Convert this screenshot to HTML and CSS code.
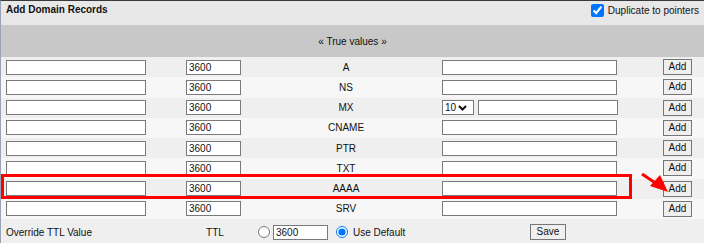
FILE: index.html
```html
<!DOCTYPE html>
<html>
<head>
<meta charset="utf-8">
<link rel="stylesheet" href="styles.css">
</head>
<body>
<div class="panel">
  <div class="head">
    <span class="title">Add Domain Records</span>
    <label class="dup"><input type="checkbox" class="chk" checked><span>Duplicate to pointers</span></label>
  </div>
  <div class="truevals">« True values »</div>

  <div class="row odd">
    <div class="c1"><span class="inp name"></span></div>
    <div class="c2"><span class="inp ttl">3600</span></div>
    <div class="c3">A</div>
    <div class="c4"><span class="inp val"></span></div>
    <div class="c5"><span class="btn">Add</span></div>
  </div>
  <div class="row even">
    <div class="c1"><span class="inp name"></span></div>
    <div class="c2"><span class="inp ttl">3600</span></div>
    <div class="c3">NS</div>
    <div class="c4"><span class="inp val"></span></div>
    <div class="c5"><span class="btn">Add</span></div>
  </div>
  <div class="row odd">
    <div class="c1"><span class="inp name"></span></div>
    <div class="c2"><span class="inp ttl">3600</span></div>
    <div class="c3">MX</div>
    <div class="c4">
      <span class="sel">10<svg class="chev" width="9" height="6" viewBox="0 0 9 6"><path d="M1 1 L4.5 4.5 L8 1" fill="none" stroke="#111" stroke-width="2"/></svg></span><span class="inp mxval"></span>
    </div>
    <div class="c5"><span class="btn">Add</span></div>
  </div>
  <div class="row even">
    <div class="c1"><span class="inp name"></span></div>
    <div class="c2"><span class="inp ttl">3600</span></div>
    <div class="c3">CNAME</div>
    <div class="c4"><span class="inp val"></span></div>
    <div class="c5"><span class="btn">Add</span></div>
  </div>
  <div class="row odd">
    <div class="c1"><span class="inp name"></span></div>
    <div class="c2"><span class="inp ttl">3600</span></div>
    <div class="c3">PTR</div>
    <div class="c4"><span class="inp val"></span></div>
    <div class="c5"><span class="btn">Add</span></div>
  </div>
  <div class="row even">
    <div class="c1"><span class="inp name"></span></div>
    <div class="c2"><span class="inp ttl">3600</span></div>
    <div class="c3">TXT</div>
    <div class="c4"><span class="inp val"></span></div>
    <div class="c5"><span class="btn">Add</span></div>
  </div>
  <div class="row odd">
    <div class="c1"><span class="inp name"></span></div>
    <div class="c2"><span class="inp ttl">3600</span></div>
    <div class="c3">AAAA</div>
    <div class="c4"><span class="inp val"></span></div>
    <div class="c5"><span class="btn">Add</span></div>
  </div>
  <div class="row even">
    <div class="c1"><span class="inp name"></span></div>
    <div class="c2"><span class="inp ttl">3600</span></div>
    <div class="c3">SRV</div>
    <div class="c4"><span class="inp val"></span></div>
    <div class="c5"><span class="btn">Add</span></div>
  </div>
  <div class="override">
    <div class="o1">Override TTL Value</div>
    <div class="o2">TTL</div>
    <div class="o3">
      <input type="radio" name="ttl" class="rad">
      <span class="inp ttl">3600</span>
      <input type="radio" name="ttl" class="rad rad2" checked>
      <span class="usedef">Use Default</span>
    </div>
    <div class="o4"><span class="btn save">Save</span></div>
  </div>

  <div class="highlight"></div>
  <svg class="arrow" width="34" height="26" viewBox="0 0 34 26">
    <line x1="1" y1="2" x2="16" y2="12" stroke="#f00" stroke-width="3"/>
    <polygon points="27,20 9,14 19,3" fill="#f00"/>
  </svg>
</div>
</body>
</html>
```

FILE: styles.css
```css
* { box-sizing: border-box; }
html, body { margin: 0; padding: 0; background: #ffffff; }
body {
  font-family: "Liberation Sans", Arial, sans-serif;
  font-size: 10px;
  color: #111;
}
.panel {
  position: relative;
  width: 704px;
  height: 243px;
  border-top: 1px solid #3a3a3a;
  border-left: 1px solid #9aa3b5;
  background: #f4f4f4;
  overflow: hidden;
}
.head {
  height: 24px;
  background: #e8e8e8;
  display: flex;
  justify-content: space-between;
  align-items: flex-start;
  padding: 3px 5px 0 5px;
}
.title { font-weight: bold; line-height: 12px; }
.dup { display: flex; align-items: center; gap: 4px; margin-top: 0; }
.chk { margin: 0; width: 13px; height: 13px; accent-color: #0075ff; }
.truevals {
  height: 32px;
  background: #c8c8c8;
  display: flex;
  align-items: center;
  justify-content: center;
  padding-left: 0;
}
.row {
  display: grid;
  grid-template-columns: 171px 83px 182px 212px 1fr;
  align-items: center;
  height: 20.25px;
}
.odd { background: #efefef; }
.even { background: #f7f7f7; }
.c1 { padding-left: 5px; }
.c2 { text-align: center; }
.c3 { text-align: center; font-weight: normal; }
.c4 { padding-left: 5px; display: flex; align-items: center; gap: 4px; }
.c5 { display: flex; justify-content: flex-end; padding-right: 12px; }
.inp {
  display: inline-block;
  height: 15px;
  border: 1px solid #7a7a7a;
  background: #fff;
  line-height: 13px;
  padding-left: 2px;
  text-align: left;
  vertical-align: middle;
}
.name { width: 140px; }
.ttl { width: 55px; }
.val { width: 175px; }
.mxval { width: 140px; }
.sel {
  display: inline-flex;
  align-items: center;
  gap: 2px;
  width: 32px;
  height: 15px;
  border: 1px solid #7a7a7a;
  background: #fff;
  padding-left: 2px;
  line-height: 13px;
}
.btn {
  display: inline-block;
  height: 16px;
  width: 29px;
  border: 1px solid #767676;
  background: #efefef;
  text-align: center;
  line-height: 14px;
}
.save { width: 36px; }
.override {
  display: flex;
  align-items: center;
  height: 26px;
  background: #efefef;
}
.o1 { width: 171px; padding-left: 5px; }
.o2 { width: 86px; text-align: center; }
.o3 { display: flex; align-items: center; gap: 3px; width: 272px; }
.rad { margin: 0; width: 12px; height: 12px; accent-color: #0075ff; }
.rad2 { margin-left: 5px; }
.usedef { margin-left: 2px; }
.o4 { padding-left: 0; }
.highlight {
  position: absolute;
  left: 0;
  top: 173px;
  width: 631px;
  height: 25px;
  border: 3px solid #ff0000;
}
.arrow {
  position: absolute;
  left: 640px;
  top: 171px;
}
```
